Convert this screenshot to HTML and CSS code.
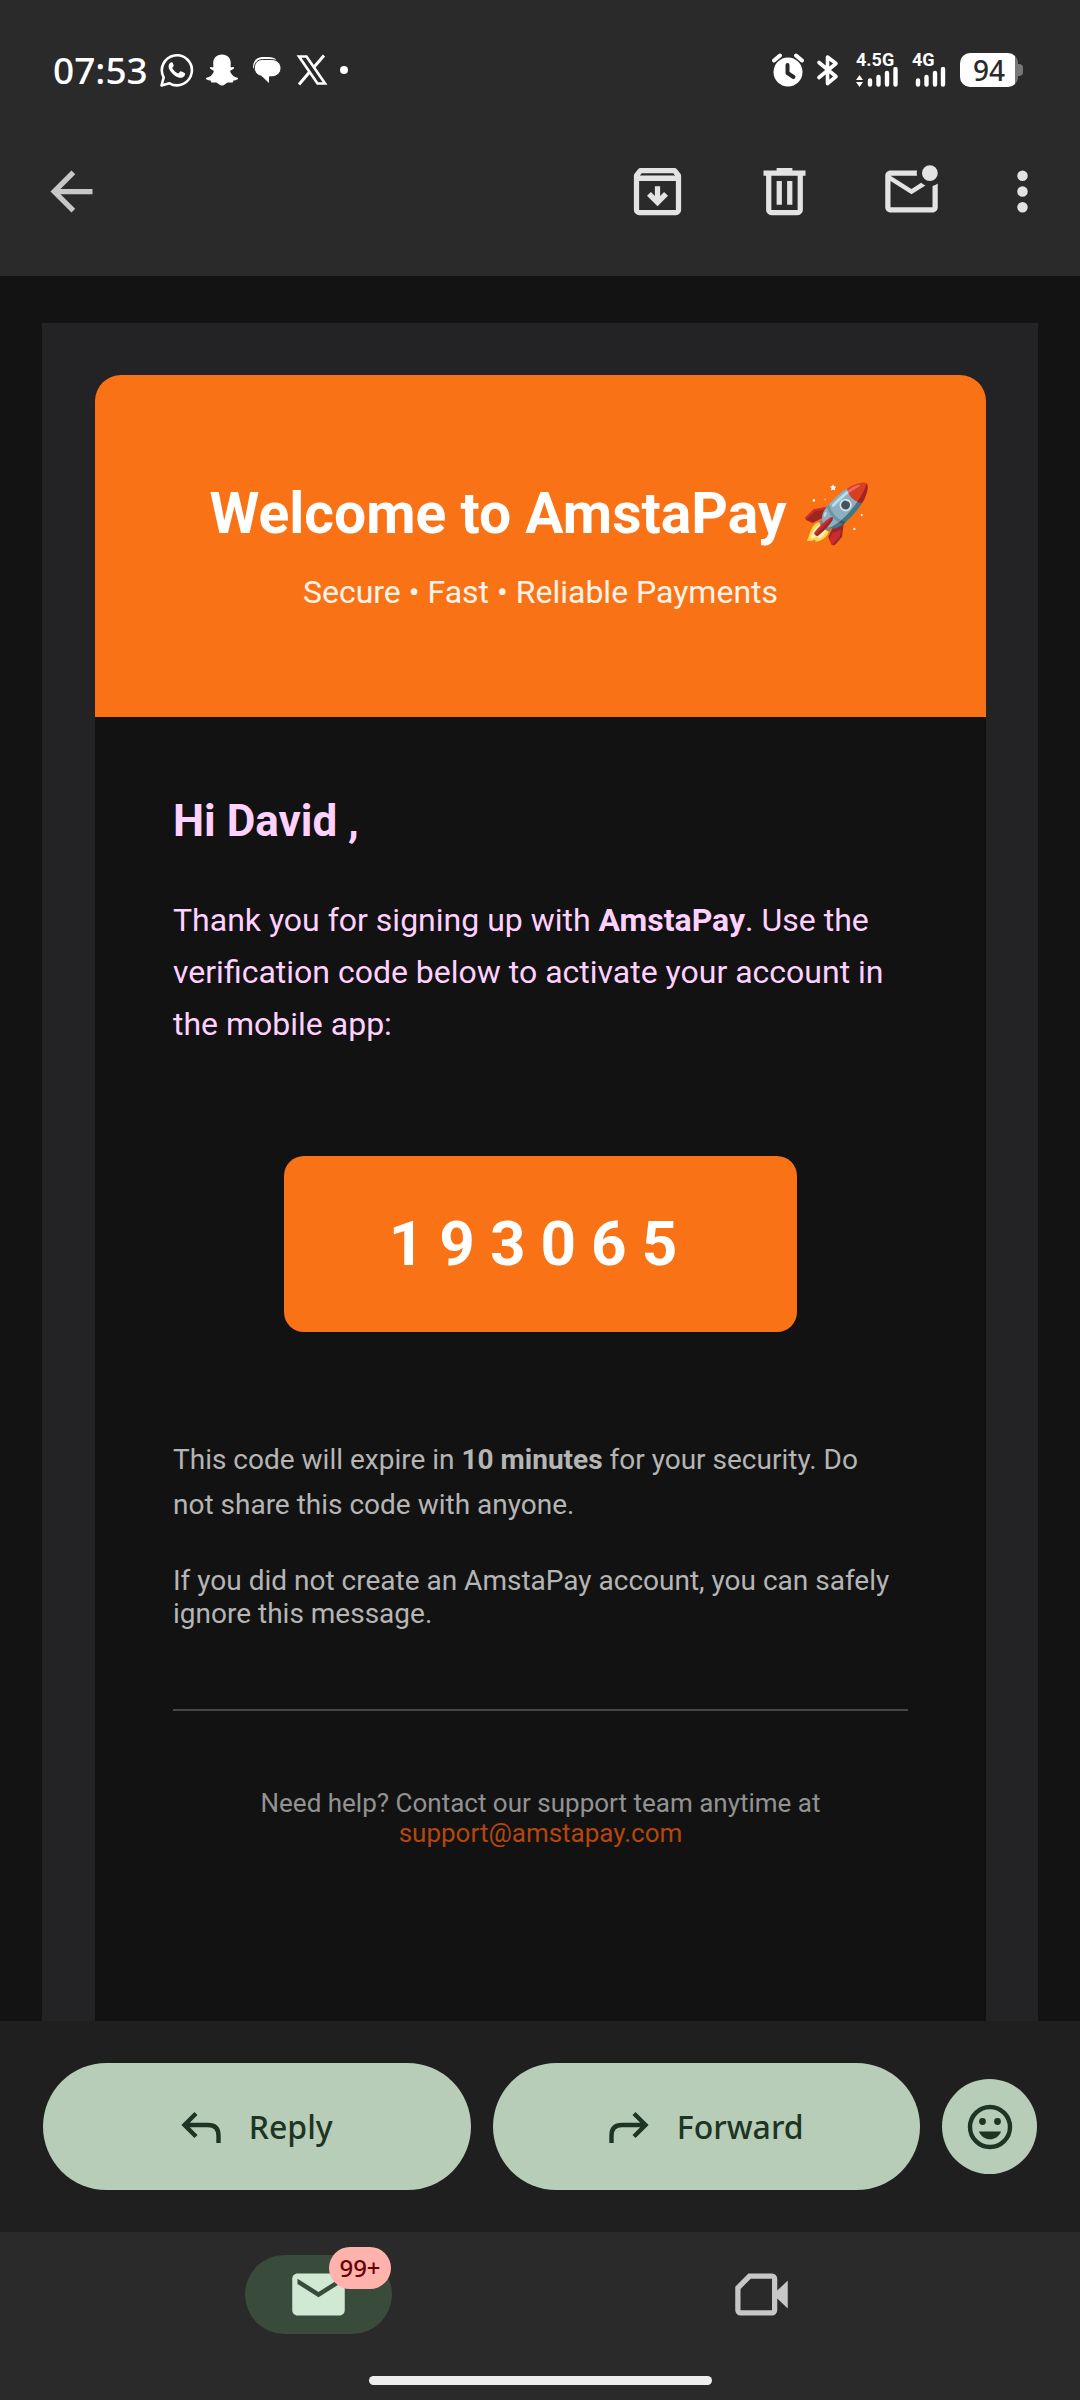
FILE: index.html
```html
<!DOCTYPE html>
<html lang="en">
<head>
<meta charset="utf-8">
<meta name="viewport" content="width=device-width, initial-scale=1">
<title>Welcome to AmstaPay</title>
<link rel="stylesheet" href="styles.css">
</head>
<body>
<div class="screen">
  <div class="status-bar">
    <div class="status-left">
      <span class="clock">07:53</span>
      <svg class="status-icon" viewBox="0 0 34 34" width="34" height="34" aria-hidden="true">
        <path d="M1.5 32.5l2.2-8.1A15 15 0 1 1 9.500 30.300z" fill="none" stroke="#fff" stroke-width="2.600" stroke-linejoin="round"/>
        <path d="M11.800 9.300c-.7 0-1.500.3-2.100 1-1.900 2.200-1.300 5.200.6 7.800 2.300 3.200 5.200 5.700 9 6.600 2.400.6 4.800-.5 5.500-2.400.3-.9.3-1.700.1-2-.6-.5-3.600-2-4.300-2-.5 0-1.700 2.200-2.300 2.200-1.600-.3-5.300-3.500-6-5.500 0-.5 1.500-1.600 1.400-2.500-.2-.9-1.100-3.200-1.900-3.200z" fill="#fff"/>
      </svg>
      <svg class="status-icon" viewBox="0 0 34 34" width="34" height="34" aria-hidden="true">
        <path d="M17 1.500c5.500 0 8.800 3.800 8.800 8.700l-.2 3.900c1 .5 2-.5 2.900 0 1 .6.500 1.700-.5 2.200l-2.400 1.200c-.6.5-.3 1.300 0 2 1.300 2.700 3.500 4.600 6.800 5.300 1.100.3.900 1.300-.1 1.800-1.200.6-2.700.8-3.800 1-.4.600-.3 1.600-1 1.900-1.100.4-3-.4-4.800.1-1.800.7-3.300 3-5.700 3s-3.900-2.300-5.700-3c-1.800-.5-3.700.3-4.800-.1-.7-.3-.6-1.300-1-1.900-1.100-.2-2.600-.4-3.800-1-1-.5-1.200-1.500-.1-1.800 3.300-.7 5.500-2.600 6.800-5.300.3-.7.600-1.500 0-2L6 16.300c-1-.5-1.500-1.600-.5-2.200.9-.5 1.900.5 2.900 0l-.2-3.900c0-4.900 3.300-8.700 8.800-8.700z" fill="#fff"/>
      </svg>
      <svg class="status-icon" viewBox="0 0 34 34" width="34" height="34" aria-hidden="true">
        <path d="M3.200 15.500c-1-5.700 2.500-11.400 9-11.400h6c4 0 6.500 1 8 2.600" fill="#fff"/>
        <path d="M12.500 6.500h8.700c6.300 0 9.800 4.300 9.800 8.600 0 5-4.100 8.700-9.300 8.700h-2.200V31L11.400 23.300C7 22.300 4.300 19 4.300 15.100c0-5 3.500-8.600 8.200-8.600z" fill="#fff" stroke="#2a2a2a" stroke-width="1"/>
      </svg>
      <svg class="status-icon" viewBox="0 0 34 34" width="34" height="34" aria-hidden="true">
        <path d="M4 3.500h7.500L30 30.500h-7.500z" fill="none" stroke="#fff" stroke-width="2.600"/>
        <path d="M29 2.500L18.700 14.500M14.800 18.800L4 31.500" stroke="#fff" stroke-width="3" fill="none"/>
      </svg>
      <span class="status-dot"></span>
    </div>
    <div class="status-right">
      <svg viewBox="0 0 32 34" width="32" height="34" aria-hidden="true">
        <circle cx="16" cy="19" r="14.500" fill="#fff"/>
        <path d="M2 7.500L8 2.500M30 7.500L24 2.500" stroke="#fff" stroke-width="4" stroke-linecap="round"/>
        <path d="M15.500 12v8l6 4" fill="none" stroke="#2a2a2a" stroke-width="4" stroke-linejoin="round" stroke-linecap="round"/>
      </svg>
      <svg viewBox="0 0 24 34" width="24" height="34" aria-hidden="true">
        <path d="M3 9.500l17 14-8.500 7V4l8.500 6.500-17 14" fill="none" stroke="#fff" stroke-width="3.600" stroke-linejoin="round" stroke-linecap="round"/>
      </svg>
      <div class="signal">
        <span class="signal-label">4.5G</span>
        <svg viewBox="0 0 42 20" width="42" height="20" aria-hidden="true">
          <path d="M0 13l3.500-5L7 13zM0 15h7l-3.500 5z" fill="#fff"/>
          <path d="M14 13.500v4M22.500 10v7.500M31 6v11.500M39.500 2v15.500" stroke="#fff" stroke-width="4.400" stroke-linecap="round"/>
        </svg>
      </div>
      <div class="signal">
        <span class="signal-label">4G</span>
        <svg viewBox="0 0 34 20" width="34" height="20" aria-hidden="true">
          <path d="M6 13.500v4M14.500 10v7.500M23 6v11.500M31 2v15.500" stroke="#fff" stroke-width="4.400" stroke-linecap="round"/>
        </svg>
      </div>
      <div class="battery"><span class="battery-level">94</span></div>
    </div>
  </div>

  <header class="toolbar">
    <button class="icon-button back" type="button" aria-label="Back">
      <svg viewBox="0 0 24 24"><path fill="currentColor" d="M20 11H7.830l5.590-5.590L12 4l-8 8 8 8 1.410-1.410L7.830 13H20v-2z"/></svg>
    </button>
    <div class="toolbar-actions">
      <button class="icon-button" type="button" aria-label="Archive">
        <svg viewBox="0 0 24 24"><path fill="currentColor" fill-rule="evenodd" d="M5.600 3h12.800c.4 0 .7.2 1 .5l1.200 1.500c.3.300.4.700.4 1.100V19a2 2 0 0 1-2 2H5a2 2 0 0 1-2-2V6.100c0-.4.100-.8.400-1.100l1.200-1.500c.3-.3.600-.5 1-.5zM6 5l-.7.900h13.400L18 5zM5 8v11h14V8zM11 10h2v3.700l1.500-1.500L16 13.600l-4 4-4-4 1.500-1.400 1.500 1.500z"/></svg>
      </button>
      <button class="icon-button" type="button" aria-label="Delete">
        <svg viewBox="0 0 24 24"><path fill="currentColor" fill-rule="evenodd" d="M9 3h6v1h5v2h-1v13a2 2 0 0 1-2 2H7a2 2 0 0 1-2-2V6H4V4h5zM7 6v13h10V6zM9 8h2v9H9zM13 8h2v9h-2z"/></svg>
      </button>
      <button class="icon-button" type="button" aria-label="Mark as unread">
        <svg viewBox="0 0 24 24"><path fill="currentColor" d="M22 8.980V18c0 1.100-.9 2-2 2H4c-1.100 0-2-.9-2-2V6c0-1.100.9-2 2-2h10.100a5 5 0 0 0 0 2H4l8 5 3.670-2.290c.47.430 1.020.76 1.630.98L12 13 4 8v10h16V9.900c.740-.15 1.420-.48 2-.92zM16 5a3 3 0 1 0 6 0 3 3 0 1 0-6 0z"/></svg>
      </button>
      <button class="icon-button more" type="button" aria-label="More options">
        <svg viewBox="0 0 24 24"><path fill="currentColor" d="M12 8a2 2 0 1 0 0-4 2 2 0 0 0 0 4zm0 2a2 2 0 1 0 0 4 2 2 0 0 0 0-4zm0 6a2 2 0 1 0 0 4 2 2 0 0 0 0-4z"/></svg>
      </button>
    </div>
  </header>

  <main class="message">
    <div class="sheet">
      <article class="card">
        <div class="hero">
          <h1>Welcome to AmstaPay 🚀</h1>
          <p>Secure • Fast • Reliable Payments</p>
        </div>
        <div class="content">
          <h2>Hi David ,</h2>
          <p class="intro">Thank you for signing up with <strong>AmstaPay</strong>. Use the verification code below to activate your account in the mobile app:</p>
          <div class="code">193065</div>
          <p class="note spaced">This code will expire in <strong>10 minutes</strong> for your security. Do not share this code with anyone.</p>
          <p class="note">If you did not create an AmstaPay account, you can safely ignore this message.</p>
          <hr>
          <p class="help">Need help? Contact our support team anytime at <a href="mailto:support@amstapay.com">support@amstapay.com</a></p>
        </div>
      </article>
    </div>
  </main>

  <div class="reply-bar">
    <button class="pill" type="button">
      <svg viewBox="0 0 40 32" width="40" height="32" aria-hidden="true"><path d="M15 2.500L3.500 14 15 25.500M4 14h23q10.500 0 10.500 10.500v7.500" fill="none" stroke="currentColor" stroke-width="4.400"/></svg>
      <span>Reply</span>
    </button>
    <button class="pill" type="button">
      <svg viewBox="0 0 40 32" width="40" height="32" aria-hidden="true"><path d="M25 2.500L36.500 14 25 25.500M36 14H13Q2.500 14 2.500 24.500v7.500" fill="none" stroke="currentColor" stroke-width="4.400"/></svg>
      <span>Forward</span>
    </button>
    <button class="react" type="button" aria-label="Add emoji reaction">
      <svg viewBox="0 0 46 46" width="46" height="46" aria-hidden="true"><circle cx="23" cy="23" r="20" fill="none" stroke="currentColor" stroke-width="4.400"/><circle cx="15.500" cy="17.500" r="3.400" fill="currentColor"/><circle cx="30.500" cy="17.500" r="3.400" fill="currentColor"/><path d="M12 27.500h22c-1.700 4.700-6 7.800-11 7.800s-9.300-3.100-11-7.800z" fill="currentColor"/></svg>
    </button>
  </div>

  <nav class="tabs">
    <a class="tab" href="#mail" aria-label="Mail, 99+ unread">
      <span class="tab-pill active">
        <svg viewBox="0 0 24 24"><path fill="currentColor" d="M20 4H4c-1.100 0-2 .9-2 2v12c0 1.100.9 2 2 2h16c1.100 0 2-.9 2-2V6c0-1.100-.9-2-2-2zm0 4l-8 5-8-5V6l8 5 8-5v2z"/></svg>
        <span class="badge">99+</span>
      </span>
    </a>
    <a class="tab" href="#meet" aria-label="Meet">
      <span class="tab-pill">
        <svg viewBox="0 0 24 24"><path fill="currentColor" fill-rule="evenodd" d="M7 4h9a2 2 0 0 1 2 2v4.500l4-3.800v10.600l-4-3.800V18a2 2 0 0 1-2 2H4a2 2 0 0 1-2-2V9zM7.900 6L4 9.900V18h12V6z"/></svg>
      </span>
    </a>
  </nav>
  <div class="gesture"><span></span></div>
</div>
</body>
</html>
```
FILE: styles.css
```css
* { box-sizing: border-box; }

body {
  margin: 0;
  background: #131313;
  font-family: Roboto, "Liberation Sans", sans-serif;
}

h1, h2, p { margin: 0; }

button {
  border: 0;
  padding: 0;
  background: none;
  font: inherit;
  color: inherit;
  cursor: pointer;
}

svg { display: block; flex: none; }

.screen {
  display: flex;
  flex-direction: column;
  height: 100vh;
}

/* Status bar */
.status-bar {
  display: flex;
  justify-content: space-between;
  align-items: center;
  flex: none;
  height: 100px;
  padding: 40px 62px 0 53px;
  background: #2a2a2a;
  color: #fff;
  font-family: "Noto Sans", sans-serif;
}

.status-left, .status-right { display: flex; align-items: center; }
.status-icon { margin-right: 11px; }

.clock {
  margin-right: 12px;
  font-size: 37px;
  line-height: 36px;
  font-weight: 500;
}

.status-dot {
  width: 8px;
  height: 8px;
  border-radius: 50%;
  background: #fff;
}

.signal {
  display: flex;
  flex-direction: column;
  height: 34px;
}

.signal-label {
  font-family: Roboto, sans-serif;
  font-size: 18px;
  line-height: 14px;
  font-weight: 700;
}

.status-right { gap: 12px; }
.status-right .signal { margin-left: 4px; }
.status-right .signal + .signal { margin-left: 2px; }

.battery {
  position: relative;
  width: 58px;
  height: 34px;
  margin-left: 2px;
  border-radius: 10px;
  background: linear-gradient(to right, #fff 55px, #777 55px);
  color: #2a2a2a;
  text-align: center;
}

.battery::after {
  content: "";
  position: absolute;
  left: 58px;
  top: 11px;
  width: 5px;
  height: 12px;
  border-radius: 0 4px 4px 0;
  background: #777;
}

.battery-level {
  font-size: 28px;
  line-height: 34px;
  font-weight: 500;
}

/* Toolbar */
.toolbar {
  display: flex;
  justify-content: space-between;
  flex: none;
  height: 176px;
  padding: 60px 26px 0 40px;
  background: #2a2a2a;
  color: #e3e3e3;
}

.toolbar-actions { display: flex; gap: 64px; }
.icon-button { width: 63px; height: 63px; }
.icon-button svg { width: 63px; height: 63px; }
.back { color: #c7c7c7; }
.more { margin-left: -16px; }

/* Message */
.message {
  display: flex;
  flex: 1;
  min-height: 0;
  overflow: hidden;
  padding: 47px 42px 0;
}

.sheet {
  flex: 1;
  min-height: 100%;
  padding: 52px 52px 0 53px;
  background: #232325;
}

.card {
  min-height: 100%;
  border-radius: 26px 26px 0 0;
  overflow: hidden;
  background: #121212;
}

.hero {
  padding: 105px 78px;
  background: #f97316;
  color: #fff;
  text-align: center;
}

.hero h1 {
  margin-bottom: 26px;
  font-size: 57px;
  line-height: 67px;
  font-weight: 700;
}

.hero p {
  font-size: 32px;
  line-height: 39px;
  color: #fff3ea;
}

.content { padding: 78px; }

.content h2 {
  margin-bottom: 46px;
  font-size: 44px;
  line-height: 53px;
  color: #ffd1ff;
}

.intro {
  font-size: 32px;
  line-height: 52px;
  color: #ffd1ff;
}

.code {
  width: fit-content;
  margin: 106px auto 105px;
  padding: 52px 105px;
  border-radius: 20px;
  background: #f97316;
  color: #fff;
  font-size: 62px;
  line-height: 72px;
  font-weight: 700;
  letter-spacing: 15px;
}

.note {
  padding-right: 8px;
  font-size: 28px;
  line-height: 33px;
  color: #b5b5b5;
}

.note.spaced {
  margin-bottom: 37px;
  line-height: 45px;
}

hr {
  height: 2px;
  margin: 79px 0 77px;
  border: 0;
  background: #484848;
}

.help {
  font-size: 26px;
  line-height: 30px;
  color: #929292;
  text-align: center;
}

.help a { color: #b4460e; text-decoration: none; }

/* Reply bar */
.reply-bar {
  display: flex;
  flex: none;
  align-items: center;
  gap: 22px;
  padding: 42px 43px;
  background: #1f1f1f;
  color: #1f3523;
  font-family: "Noto Sans", sans-serif;
}

.pill {
  display: flex;
  flex: 1;
  align-items: center;
  justify-content: center;
  gap: 28px;
  height: 127px;
  border-radius: 64px;
  background: #b7cdb8;
  font-size: 32px;
  line-height: 40px;
  font-weight: 500;
}

.react {
  display: flex;
  align-items: center;
  justify-content: center;
  width: 95px;
  height: 95px;
  border-radius: 50%;
  background: #b7cdb8;
}

/* Bottom tabs */
.tabs {
  display: flex;
  flex: none;
  justify-content: space-around;
  padding: 23px 97px 0;
  background: #2a2a2a;
}

.tab { color: #c7c7c7; text-decoration: none; }

.tab-pill {
  position: relative;
  display: flex;
  align-items: center;
  justify-content: center;
  width: 147px;
  height: 79px;
  border-radius: 40px;
}

.tab-pill.active { background: #394b3a; color: #d1e8d3; }
.tab-pill svg { width: 63px; height: 63px; }

.badge {
  position: absolute;
  top: -8px;
  right: 1px;
  width: 62px;
  height: 42px;
  border-radius: 21px;
  background: #ffb3ac;
  color: #690005;
  font: 500 24px/42px "Noto Sans", sans-serif;
  text-align: center;
}

.gesture {
  display: flex;
  flex: none;
  justify-content: center;
  padding: 42px 0 15px;
  background: #2a2a2a;
}

.gesture span {
  width: 343px;
  height: 9px;
  border-radius: 5px;
  background: #eee;
}
```
